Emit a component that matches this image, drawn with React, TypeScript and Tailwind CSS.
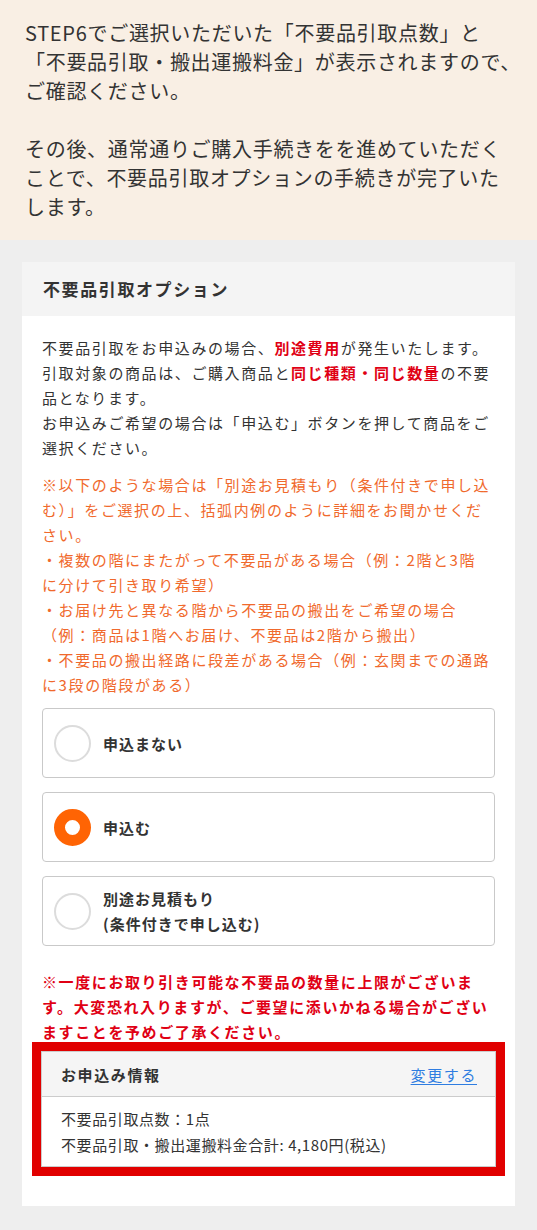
import { Fragment, type ReactNode } from 'react';

const introParagraphs = [
  ['STEP6でご選択いただいた「不要品引取点数」と', '「不要品引取・搬出運搬料金」が表示されますので、', 'ご確認ください。'],
  ['その後、通常通りご購入手続きをを進めていただく', 'ことで、不要品引取オプションの手続きが完了いた', 'します。'],
];

const cautionLines = [
  '※以下のような場合は「別途お見積もり（条件付きで申し込',
  'む）」をご選択の上、括弧内例のように詳細をお聞かせくだ',
  'さい。',
  '・複数の階にまたがって不要品がある場合（例：2階と3階',
  'に分けて引き取り希望）',
  '・お届け先と異なる階から不要品の搬出をご希望の場合',
  '（例：商品は1階へお届け、不要品は2階から搬出）',
  '・不要品の搬出経路に段差がある場合（例：玄関までの通路',
  'に3段の階段がある）',
];

const options = [
  { id: 'none', label: ['申込まない'] },
  { id: 'apply', label: ['申込む'] },
  { id: 'estimate', label: ['別途お見積もり', '(条件付きで申し込む)'] },
];

function Lines({ lines }: { lines: ReactNode[] }) {
  return (
    <>
      {lines.map((line, i) => (
        <Fragment key={i}>
          {i > 0 && <br />}
          {line}
        </Fragment>
      ))}
    </>
  );
}

function Em({ children }: { children: ReactNode }) {
  return <span className="font-bold text-[#e00014]">{children}</span>;
}

function Radio({ checked }: { checked: boolean }) {
  return checked ? (
    <span className="size-[37px] shrink-0 rounded-full border-[11px] border-[#ff6404] bg-white" />
  ) : (
    <span className="size-[37px] shrink-0 rounded-full border-2 border-[#dcdcdc] bg-white" />
  );
}

export default function App() {
  const selected = 'apply';

  return (
    <div className="min-h-[1230px] bg-[#eeeeee] font-['Noto_Sans_CJK_JP',sans-serif] text-[#333333]">
      <section className="bg-[#f9efe4] pl-[25px] pr-[10px] pt-[18px] pb-[19px] text-[20px] leading-[29px] tracking-[0.7px] whitespace-nowrap">
        {introParagraphs.map((para, i) => (
          <p key={i} className={i > 0 ? 'mt-[29px]' : ''}>
            <Lines lines={para} />
          </p>
        ))}
      </section>

      <section className="px-[22px] pt-[22px] pb-[23px]">
        <div className="bg-[#f4f4f4]">
          <h2 className="flex h-[54px] items-center pl-[21px] text-[17px] font-bold tracking-[1.6px]">
            不要品引取オプション
          </h2>

          <div className="bg-white px-[20px] pt-[19px] pb-[30px] text-[15px] leading-[25px] tracking-[1.6px] whitespace-nowrap">
            <p>
              <Lines
                lines={[
                  <>不要品引取をお申込みの場合、<Em>別途費用</Em>が発生いたします。</>,
                  <>引取対象の商品は、ご購入商品と<Em>同じ種類・同じ数量</Em>の不要</>,
                  '品となります。',
                  'お申込みご希望の場合は「申込む」ボタンを押して商品をご',
                  '選択ください。',
                ]}
              />
            </p>

            <p className="mt-[12px] text-[#f0692c]">
              <Lines lines={cautionLines} />
            </p>

            <div className="mt-[11px] flex flex-col gap-[14px]">
              {options.map((opt) => (
                <label
                  key={opt.id}
                  className="flex h-[70px] items-center gap-[12px] rounded-[4px] border border-[#c9c9c9] pl-[11px] text-[15px] font-bold tracking-[1px]"
                >
                  <Radio checked={opt.id === selected} />
                  <span>
                    <Lines lines={opt.label} />
                  </span>
                </label>
              ))}
            </div>

            <p className="mt-[23px] font-bold text-[#e00014]">
              <Lines
                lines={[
                  '※一度にお取り引き可能な不要品の数量に上限がございま',
                  'す。大変恐れ入りますが、ご要望に添いかねる場合がござい',
                  'ますことを予めご了承ください。',
                ]}
              />
            </p>

            <div className="-mx-[10px] mt-[-2px] border-[9px] border-[#e10000]">
              <div className="border border-[#cccccc]">
                <div className="flex h-[45px] items-center justify-between border-b border-[#cccccc] bg-[#f5f5f5] pl-[19px] pr-[18px]">
                  <span className="font-bold">お申込み情報</span>
                  <a href="#" className="text-[#2f7de1] underline underline-offset-[3px]">
                    変更する
                  </a>
                </div>
                <div className="pl-[19px] pt-[9px] pb-[8px] leading-[26px] tracking-[0.6px]">
                  <p>不要品引取点数：1点</p>
                  <p>不要品引取・搬出運搬料金合計: 4,180円(税込)</p>
                </div>
              </div>
            </div>
          </div>
        </div>
      </section>
    </div>
  );
}
